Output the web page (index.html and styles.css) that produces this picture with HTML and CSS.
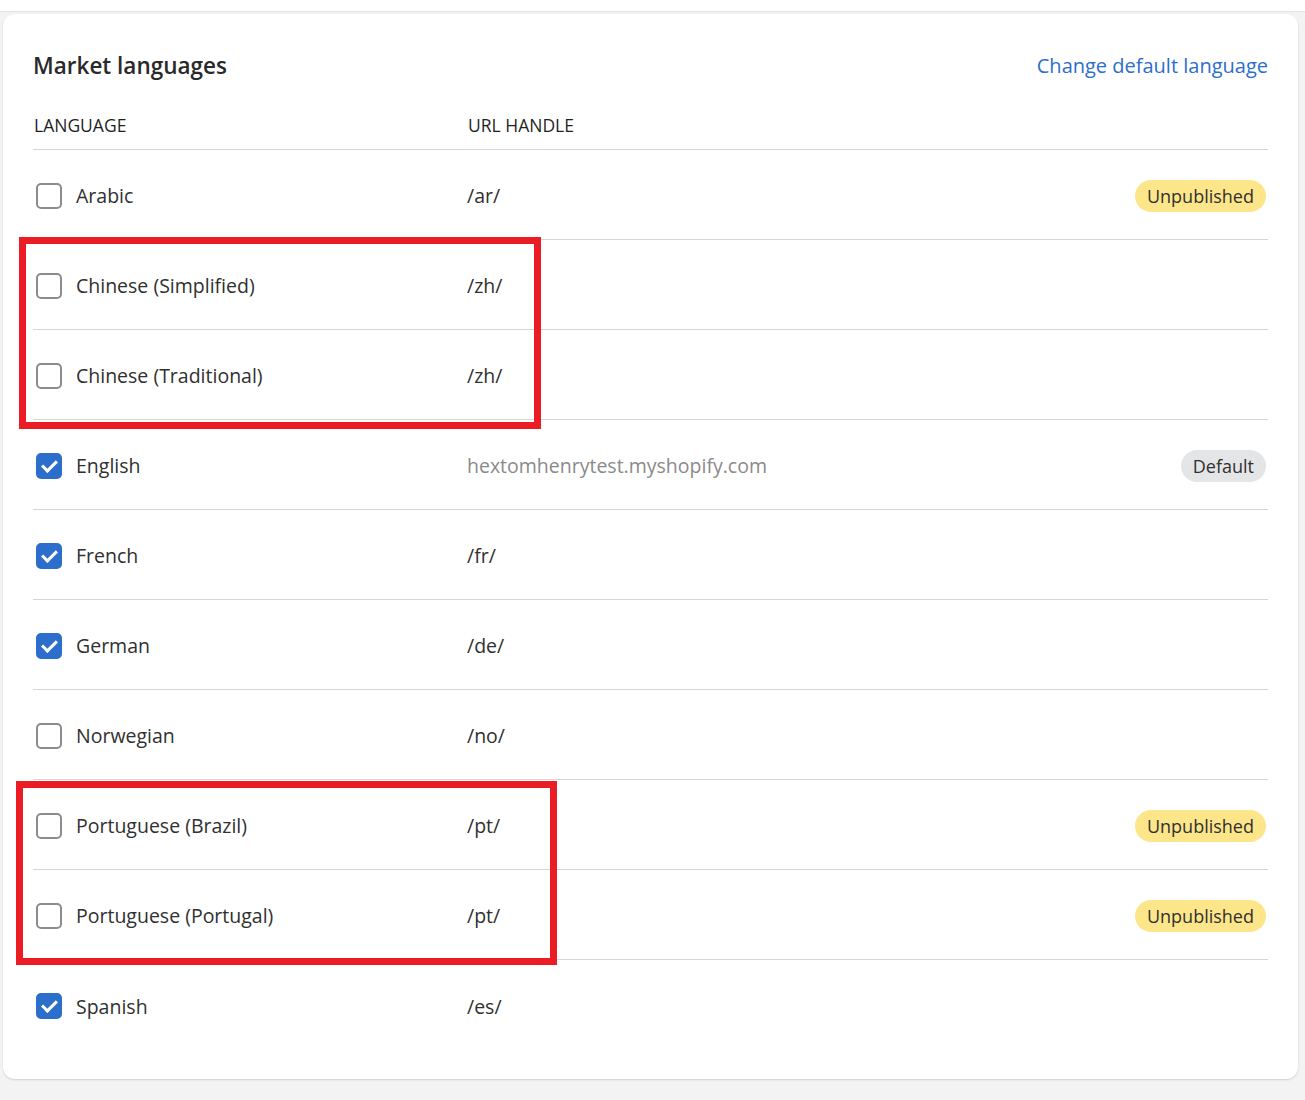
FILE: index.html
```html
<html>
<head>
    <link rel="stylesheet" href="styles.css">
</head>
<body>
<div class="topbar"></div>
<div class="card">
    <div class="card_head">
        <h2 class="title">Market languages</h2>
        <a class="link" href="#">Change default language</a>
    </div>
    <div class="row head_row">
        <span class="col_lang">Language</span>
        <span class="col_url">URL handle</span>
    </div>

    <div class="row">
        <span class="col_lang"><span class="check"></span>Arabic</span>
        <span class="col_url">/ar/</span>
        <span class="badge warn">Unpublished</span>
    </div>
    <div class="row">
        <span class="col_lang"><span class="check"></span>Chinese (Simplified)</span>
        <span class="col_url">/zh/</span>
    </div>
    <div class="row">
        <span class="col_lang"><span class="check"></span>Chinese (Traditional)</span>
        <span class="col_url">/zh/</span>
    </div>
    <div class="row">
        <span class="col_lang"><span class="check on"></span>English</span>
        <span class="col_url muted">hextomhenrytest.myshopify.com</span>
        <span class="badge">Default</span>
    </div>
    <div class="row">
        <span class="col_lang"><span class="check on"></span>French</span>
        <span class="col_url">/fr/</span>
    </div>
    <div class="row">
        <span class="col_lang"><span class="check on"></span>German</span>
        <span class="col_url">/de/</span>
    </div>
    <div class="row">
        <span class="col_lang"><span class="check"></span>Norwegian</span>
        <span class="col_url">/no/</span>
    </div>
    <div class="row">
        <span class="col_lang"><span class="check"></span>Portuguese (Brazil)</span>
        <span class="col_url">/pt/</span>
        <span class="badge warn">Unpublished</span>
    </div>
    <div class="row">
        <span class="col_lang"><span class="check"></span>Portuguese (Portugal)</span>
        <span class="col_url">/pt/</span>
        <span class="badge warn">Unpublished</span>
    </div>
    <div class="row">
        <span class="col_lang"><span class="check on"></span>Spanish</span>
        <span class="col_url">/es/</span>
    </div>
</div>

<!-- annotation boxes drawn over the screenshot -->
<div class="mark mark_zh"></div>
<div class="mark mark_pt"></div>
</body>
</html>
```

FILE: styles.css
```css
body {
    margin:0;
    background:#f3f3f4;
    font-family:"Open Sans", "Noto Sans", sans-serif;
    color:#303030;
    position:relative;
}

.topbar {
    height:11px;
    background:#fff;
    border-bottom:1px solid #e3e3e3;
}

.card {
    margin:2px 7px 0 3px;
    padding:30px 30px 29px 30px;
    background:#fff;
    border-radius:12px;
    box-shadow:0 1px 2px rgba(0,0,0,0.15);
}

.card_head {
    display:flex;
    justify-content:space-between;
    align-items:center;
    height:42px;
}

.title {
    margin:0;
    font-size:22.5px;
    font-weight:600;
    color:#2a2a2a;
}

.link {
    font-size:20px;
    color:#2c6ecb;
    text-decoration:none;
    margin-top:1px;
}

.row {
    display:flex;
    align-items:center;
    height:90px;
    padding-top:2px;
    box-sizing:border-box;
    border-bottom:1px solid #d6d6d6;
    font-size:19.5px;
}

.row:last-child {
    border-bottom:0;
}

.head_row {
    height:45px;
    margin-top:19px;
    padding:0 0 4px 0;
    font-size:17.5px;
    text-transform:uppercase;
    color:#1f1f1f;
}

.col_lang {
    width:434px;
    display:flex;
    align-items:center;
}

.head_row .col_lang {
    padding-left:1px;
}

.col_url {
    flex:1;
}

.muted {
    color:#8a8a8a;
}

.check {
    width:22px;
    height:22px;
    border:2px solid #8c8c8c;
    border-radius:5px;
    margin-left:3px;
    margin-right:14px;
    box-sizing:content-box;
    position:relative;
}

.check.on {
    background:#2c6ecb;
    border-color:#2c6ecb;
}

.check.on:after {
    content:'';
    position:absolute;
    left:7px;
    top:2px;
    width:6px;
    height:12px;
    border-right:3px solid #fff;
    border-bottom:3px solid #fff;
    transform:rotate(45deg);
}

.badge {
    background:#e4e5e7;
    border-radius:16px;
    padding:2px 12px;
    line-height:28px;
    font-size:18px;
    margin-right:2px;
}

.badge.warn {
    background:#fde68a;
}

.mark {
    position:absolute;
    border:7px solid #ec1c24;
    box-sizing:border-box;
}

.mark_zh {
    left:19px;
    top:237px;
    width:522px;
    height:192px;
}

.mark_pt {
    left:16px;
    top:781px;
    width:541px;
    height:184px;
}
```
